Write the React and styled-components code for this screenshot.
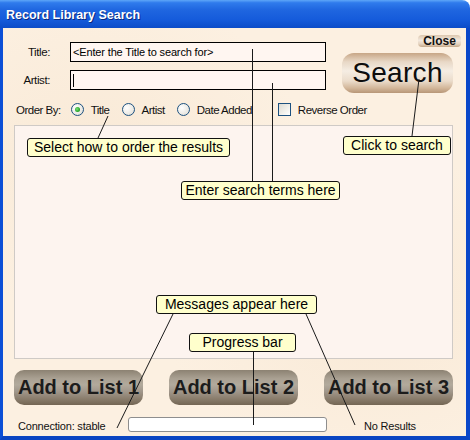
import React from 'react';
import styled, { createGlobalStyle } from 'styled-components';

const GlobalStyle = createGlobalStyle`
  html, body {
    margin: 0;
    padding: 0;
    background: #ffffff;
  }
  body {
    font-family: "Liberation Sans", Arial, sans-serif;
  }
`;

// callout boxes and their leader lines lie over the form
const callouts = [
  { text: 'Select how to order the results', left: 27, top: 138, width: 203 },
  { text: 'Click to search', left: 343, top: 136, width: 108 },
  { text: 'Enter search terms here', left: 181, top: 181, width: 159 },
  { text: 'Messages appear here', left: 156, top: 295, width: 161 },
  { text: 'Progress bar', left: 189, top: 333, width: 107 },
];

const leaders = [
  [108, 116, 98, 138],
  [419, 79, 412, 136],
  [252.5, 49, 252.5, 181],
  [272.5, 83, 272.5, 181],
  [173, 314, 117, 428],
  [306, 314, 355, 425],
  [253.5, 351, 253.5, 425],
];

const App = () => {
  return (
    <>
      <GlobalStyle />
      <Window>
        <TitleBar>
          <TitleText>Record Library Search</TitleText>
        </TitleBar>
        <Body>
          <TopSection>
            <Fields>
              <FieldLabel>Title:</FieldLabel>
              <TextBox>&lt;Enter the Title to search for&gt;</TextBox>
              <FieldLabel>Artist:</FieldLabel>
              <TextBox><Caret /></TextBox>
            </Fields>
            <RightCol>
              <CloseButton>Close</CloseButton>
              <SearchButton>Search</SearchButton>
            </RightCol>
          </TopSection>

          <OrderRow>
            <OrderLabel>Order By:</OrderLabel>
            <Option>
              <Radio $checked />
              <span>Title</span>
            </Option>
            <Option>
              <Radio />
              <span>Artist</span>
            </Option>
            <Option>
              <Radio />
              <span>Date Added</span>
            </Option>
            <Option $gapBefore={14}>
              <Checkbox />
              <span>Reverse Order</span>
            </Option>
          </OrderRow>

          <ResultsPanel />

          <ButtonsRow>
            <ListButton>Add to List 1</ListButton>
            <ListButton>Add to List 2</ListButton>
            <ListButton>Add to List 3</ListButton>
          </ButtonsRow>

          <StatusRow>
            <StatusText $width={110}>Connection: stable</StatusText>
            <ProgressBar />
            <StatusText $gapBefore={37}>No Results</StatusText>
          </StatusRow>
        </Body>

        <Overlay>
          <svg width="470" height="440">
            {leaders.map(([x1, y1, x2, y2], i) => (
              <line key={i} x1={x1} y1={y1} x2={x2} y2={y2} stroke="#1a1a1a" strokeWidth="1" />
            ))}
          </svg>
          {callouts.map((c) => (
            <Callout key={c.text} style={{ left: c.left, top: c.top, width: c.width }}>
              {c.text}
            </Callout>
          ))}
        </Overlay>
      </Window>
    </>
  );
};

export default App;

const Window = styled.div`
  position: relative;
  width: 470px;
  height: 440px;
  display: flex;
  flex-direction: column;
  box-sizing: border-box;
  overflow: hidden;
`;

const TitleBar = styled.div`
  height: 28px;
  flex: none;
  display: flex;
  align-items: center;
  padding-left: 6px;
  border-top-right-radius: 8px;
  background: linear-gradient(
    180deg,
    #5ea6f8 0%,
    #2f7bec 10%,
    #1f66e0 35%,
    #155bdb 70%,
    #0c4cc8 100%
  );
`;

const TitleText = styled.span`
  color: #ffffff;
  font-family: "Liberation Sans", Arial, sans-serif;
  font-weight: bold;
  font-size: 12.5px;
  text-shadow: 1px 1px 0 #0a2a80;
  margin-top: 1px;
`;

const Body = styled.div`
  flex: 1;
  display: flex;
  flex-direction: column;
  padding: 0 5px 4px 11px;
  background-color: #fcf0e1;
  border-left: 3px solid #0c4fd6;
  border-right: 4px solid #0a47c9;
  border-bottom: 4px solid #0a45c2;
  background-image:
    radial-gradient(ellipse at 20% 30%, rgba(240, 215, 185, 0.25), transparent 40%),
    radial-gradient(ellipse at 80% 70%, rgba(240, 215, 185, 0.25), transparent 40%);
`;

const TopSection = styled.div`
  display: flex;
  align-items: flex-start;
  height: 65px;
`;

const Fields = styled.div`
  display: grid;
  grid-template-columns: 36px 256px;
  grid-auto-rows: 20px;
  column-gap: 20px;
  row-gap: 8px;
  margin-top: 14px;
`;

const FieldLabel = styled.div`
  font-size: 11.5px;
  letter-spacing: -0.4px;
  color: #111;
  text-align: right;
  display: flex;
  align-items: center;
  justify-content: flex-end;
  white-space: nowrap;
`;

const TextBox = styled.div`
  box-sizing: border-box;
  height: 20px;
  border: 1px solid #000;
  background: #fff6f1;
  font-size: 11px;
  letter-spacing: -0.15px;
  color: #000;
  padding-left: 2px;
  display: flex;
  align-items: center;
  white-space: nowrap;
  overflow: hidden;
`;

const Caret = styled.span`
  display: block;
  width: 1px;
  height: 13px;
  background: #000;
`;

const RightCol = styled.div`
  display: flex;
  flex-direction: column;
  align-items: flex-start;
  width: 119px;
  margin-left: 16px;
`;

const CloseButton = styled.div`
  align-self: flex-end;
  margin-top: 7px;
  width: 43px;
  height: 12px;
  box-sizing: border-box;
  border-radius: 4px;
  font-size: 12px;
  line-height: 12px;
  font-weight: bold;
  color: #111;
  text-align: center;
  background: linear-gradient(180deg, #dcc7ae 0%, #f3e9de 45%, #e5d3bf 75%, #c5a888 100%);
`;

const SearchButton = styled.div`
  margin-top: 6px;
  width: 111px;
  height: 40px;
  border-radius: 12px;
  display: flex;
  align-items: center;
  justify-content: center;
  font-size: 28px;
  letter-spacing: 0.3px;
  color: #0d0d0d;
  background: linear-gradient(
    180deg,
    #c7a686 0%,
    #e8d8c6 22%,
    #f5ede3 45%,
    #ebdccb 70%,
    #d2b699 88%,
    #b79677 100%
  );
`;

const OrderRow = styled.div`
  display: flex;
  align-items: center;
  height: 13px;
  margin-top: 10px;
  padding-left: 2px;
  font-size: 11.5px;
  letter-spacing: -0.5px;
  color: #111;
`;

const OrderLabel = styled.span`
  margin-right: 10px;
  white-space: nowrap;
`;

const Option = styled.label`
  display: flex;
  align-items: center;
  gap: 7px;
  margin-left: ${(p) => (p.$gapBefore ? `${p.$gapBefore}px` : '0')};
  margin-right: 12px;
  white-space: nowrap;
`;

const Radio = styled.span`
  position: relative;
  width: 13px;
  height: 13px;
  box-sizing: border-box;
  border-radius: 50%;
  border: 1px solid #1c5180;
  background: radial-gradient(circle at 35% 35%, #ffffff 0%, #eceae4 60%, #d6d3cb 100%);
  flex: none;

  &::after {
    content: '';
    display: ${(p) => (p.$checked ? 'block' : 'none')};
    position: absolute;
    left: 3px;
    top: 3px;
    width: 5px;
    height: 5px;
    border-radius: 50%;
    background: radial-gradient(circle at 40% 40%, #7ee07e 0%, #2aa82a 60%, #1a7c1a 100%);
  }
`;

const Checkbox = styled.span`
  width: 13px;
  height: 13px;
  box-sizing: border-box;
  border: 1px solid #1c5180;
  background: linear-gradient(135deg, #dcdad2 0%, #f2f1ec 60%, #ffffff 100%);
  flex: none;
`;

const ResultsPanel = styled.div`
  margin-top: 9px;
  width: 439px;
  height: 234px;
  box-sizing: border-box;
  border: 1px solid #cfcac6;
  background: #fdf4ef;
`;

const ButtonsRow = styled.div`
  display: flex;
  justify-content: space-between;
  width: 439px;
  margin-top: 11px;
`;

const ListButton = styled.div`
  width: 129px;
  height: 35px;
  border-radius: 10px;
  display: flex;
  align-items: center;
  justify-content: center;
  font-size: 20px;
  font-weight: bold;
  color: #1c1c1c;
  white-space: nowrap;
  background: linear-gradient(
    180deg,
    #8c8272 0%,
    #aaa193 25%,
    #b2aa9c 42%,
    #a0968a 62%,
    #8a7d6c 82%,
    #746654 100%
  );
`;

const StatusRow = styled.div`
  display: flex;
  align-items: center;
  height: 15px;
  margin-top: 12px;
  padding-left: 4px;
`;

const StatusText = styled.span`
  font-size: 11px;
  letter-spacing: -0.2px;
  color: #111;
  white-space: nowrap;
  margin-top: 3px;
  width: ${(p) => (p.$width ? `${p.$width}px` : 'auto')};
  margin-left: ${(p) => (p.$gapBefore ? `${p.$gapBefore}px` : '0')};
  flex: none;
`;

const ProgressBar = styled.div`
  width: 199px;
  height: 15px;
  flex: none;
  box-sizing: border-box;
  border: 1px solid #8e8e8e;
  border-radius: 3px;
  background: #ffffff;
`;

const Overlay = styled.div`
  position: absolute;
  inset: 0;
  pointer-events: none;

  svg {
    position: absolute;
    left: 0;
    top: 0;
  }
`;

const Callout = styled.div`
  position: absolute;
  height: 19px;
  box-sizing: border-box;
  border: 1px solid #111;
  border-radius: 3px;
  background: #ffffcc;
  font-size: 14px;
  line-height: 17px;
  color: #000;
  text-align: center;
  white-space: nowrap;
`;
